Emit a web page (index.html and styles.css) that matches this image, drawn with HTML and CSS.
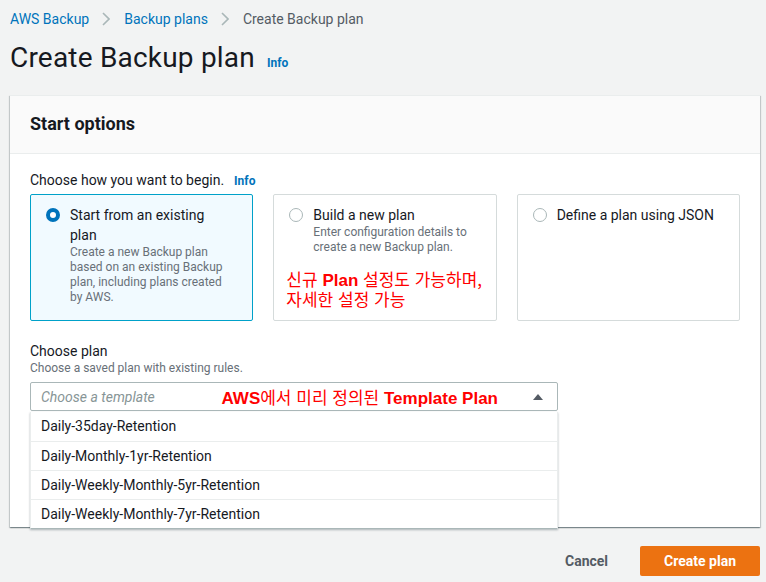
FILE: index.html
```html
<!DOCTYPE html>
<html lang="ko">
<head>
<meta charset="utf-8">
<title>Create Backup plan</title>
<link rel="stylesheet" href="styles.css">
</head>
<body>
<div class="page">
  <nav class="crumbs">
    <a class="crumb-link">AWS Backup</a>
    <svg class="chev" viewBox="0 0 8 14" width="8" height="14"><path d="M1 1l6 6-6 6"/></svg>
    <a class="crumb-link">Backup plans</a>
    <svg class="chev" viewBox="0 0 8 14" width="8" height="14"><path d="M1 1l6 6-6 6"/></svg>
    <span class="crumb-current">Create Backup plan</span>
  </nav>

  <div class="title-row">
    <h1 class="title">Create Backup plan</h1>
    <a class="info">Info</a>
  </div>

  <section class="panel">
    <header class="panel-head">
      <h2 class="panel-title">Start options</h2>
    </header>
    <div class="panel-body">
      <div class="field-label">Choose how you want to begin.<a class="info info-inline">Info</a></div>
      <div class="tiles">
        <div class="tile tile-selected">
          <span class="radio radio-checked"></span>
          <div class="tile-text">
            <div class="tile-title">Start from an existing plan</div>
            <div class="tile-desc">Create a new Backup plan based on an existing Backup plan, including plans created by AWS.</div>
          </div>
        </div>
        <div class="tile">
          <span class="radio"></span>
          <div class="tile-text">
            <div class="tile-title">Build a new plan</div>
            <div class="tile-desc">Enter configuration details to create a new Backup plan.</div>
            <div class="note note-block">
              <div class="note-line">신규 <b>Plan</b> 설정도 가능하며,</div>
              <div class="note-line">자세한 설정 가능</div>
            </div>
          </div>
        </div>
        <div class="tile">
          <span class="radio"></span>
          <div class="tile-text">
            <div class="tile-title">Define a plan using JSON</div>
          </div>
        </div>
      </div>

      <div class="field">
        <div class="field-label">Choose plan</div>
        <div class="hint">Choose a saved plan with existing rules.</div>
        <div class="select-wrap">
          <div class="select">
            <span class="placeholder">Choose a template</span>
            <span class="note note-inline"><b>AWS</b>에서 미리 정의된 <b>Template Plan</b></span>
            <span class="caret"></span>
          </div>
          <ul class="options">
            <li class="option">Daily-35day-Retention</li>
            <li class="option">Daily-Monthly-1yr-Retention</li>
            <li class="option">Daily-Weekly-Monthly-5yr-Retention</li>
            <li class="option">Daily-Weekly-Monthly-7yr-Retention</li>
          </ul>
        </div>
      </div>
    </div>
  </section>

  <div class="actions">
    <button class="btn-link">Cancel</button>
    <button class="btn-primary">Create plan</button>
  </div>
</div>
</body>
</html>
```

FILE: styles.css
```css
* { box-sizing: border-box; }

html, body {
  margin: 0;
  padding: 0;
  background: #f2f3f3;
}

body {
  font-family: Roboto, "Noto Sans", "Noto Sans CJK KR", sans-serif;
  color: #16191f;
  font-size: 14px;
  line-height: 20px;
}

.page {
  padding: 9px 6px 0 10px;
}

.crumbs {
  display: flex;
  align-items: center;
  height: 20px;
  font-size: 14px;
}

.crumb-link {
  color: #0073bb;
}

.chev {
  margin: 0 14px 0 13px;
  fill: none;
  stroke: #aab7b8;
  stroke-width: 1.6;
}

.crumb-current {
  color: #545b64;
}

.title-row {
  display: flex;
  align-items: baseline;
  margin-top: 11px;
}

.title {
  margin: 0;
  font-size: 28px;
  line-height: 36px;
  font-weight: 400;
  letter-spacing: 0.2px;
  color: #16191f;
}

.info {
  color: #0073bb;
  font-size: 12px;
  line-height: 1;
  font-weight: 700;
  margin-left: 12px;
}

.info-inline {
  margin-left: 10px;
}

.panel {
  margin-top: 19px;
  background: #fff;
  border-top: 1px solid #eaeded;
  box-shadow: 0 1px 1px 0 rgba(0, 28, 36, 0.3), 1px 1px 1px 0 rgba(0, 28, 36, 0.15), -1px 1px 1px 0 rgba(0, 28, 36, 0.15);
}

.panel-head {
  background: #fafafa;
  border-bottom: 1px solid #eaeded;
  padding: 17px 20px 18px;
}

.panel-title {
  margin: 0;
  font-size: 18px;
  line-height: 22px;
  font-weight: 700;
}

.panel-body {
  padding: 16px 20px 116px;
}

.field-label {
  font-size: 14px;
  line-height: 20px;
}

.tiles {
  display: grid;
  grid-template-columns: repeat(3, minmax(0, 1fr));
  gap: 20px;
  margin-top: 4px;
}

.tile {
  display: flex;
  align-items: flex-start;
  gap: 10px;
  border: 1px solid #d5dbdb;
  border-radius: 2px;
  padding: 10px 23px 15px 15px;
  background: #fff;
}

.tile-selected {
  border-color: #00a1c9;
  background: #f1faff;
}

.radio {
  flex: none;
  width: 14px;
  height: 14px;
  margin-top: 3px;
  border-radius: 50%;
  border: 1.5px solid #aab7b8;
  background: #fff;
}

.radio-checked {
  border: 4px solid #0073bb;
}

.tile-text {
  min-width: 0;
}

.tile-title {
  font-size: 14px;
  line-height: 20px;
  color: #16191f;
}

.tile-desc {
  font-size: 12px;
  line-height: 15px;
  color: #687078;
}

.note {
  color: #ff0000;
  font-family: "Noto Sans CJK KR", sans-serif;
  font-size: 17px;
  font-weight: 400;
}

.note b {
  font-family: "Liberation Sans", "Noto Sans CJK KR", sans-serif;
  font-weight: 700;
  line-height: 1;
}

.note-block {
  margin: 14px 0 -5px -27px;
  white-space: nowrap;
}

.note-line {
  height: 20px;
  line-height: 20px;
}

.field {
  margin-top: 20px;
}

.hint {
  font-size: 12px;
  line-height: 15px;
  color: #687078;
}

.select-wrap {
  position: relative;
  width: 528px;
  margin-top: 6px;
}

.select {
  display: flex;
  align-items: center;
  height: 29px;
  border: 1px solid #aab7b8;
  border-radius: 2px;
  padding: 0 14px 0 10px;
  background: #fff;
}

.placeholder {
  font-style: italic;
  color: #879596;
}

.note-inline {
  margin-left: auto;
  margin-right: 35px;
  line-height: 20px;
}

.caret {
  width: 0;
  height: 0;
  border-left: 5px solid transparent;
  border-right: 5px solid transparent;
  border-bottom: 6px solid #545b64;
}

.options {
  position: absolute;
  top: 100%;
  left: 0;
  right: 0;
  margin: 1px 0 0;
  padding: 0;
  list-style: none;
  background: #fff;
  border: 1px solid #eaeded;
  border-top: none;
  border-bottom: 1px solid #aab7b8;
  box-shadow: 0 1px 2px rgba(0, 28, 36, 0.3);
}

.option {
  height: 29px;
  line-height: 28px;
  padding: 0 10px;
  border-top: 1px solid #eaeded;
  color: #16191f;
}

.option:first-child {
  border-top: none;
}

.actions {
  display: flex;
  justify-content: flex-end;
  align-items: center;
  margin-top: 19px;
}

.btn-link {
  border: none;
  background: none;
  font-family: inherit;
  font-size: 14px;
  font-weight: 700;
  color: #545b64;
  padding: 4px 20px;
  margin-right: 12px;
}

.btn-primary {
  border: none;
  background: #ec7211;
  color: #fff;
  font-family: inherit;
  font-size: 14px;
  font-weight: 700;
  height: 30px;
  padding: 0 24px;
  border-radius: 2px;
}
```
